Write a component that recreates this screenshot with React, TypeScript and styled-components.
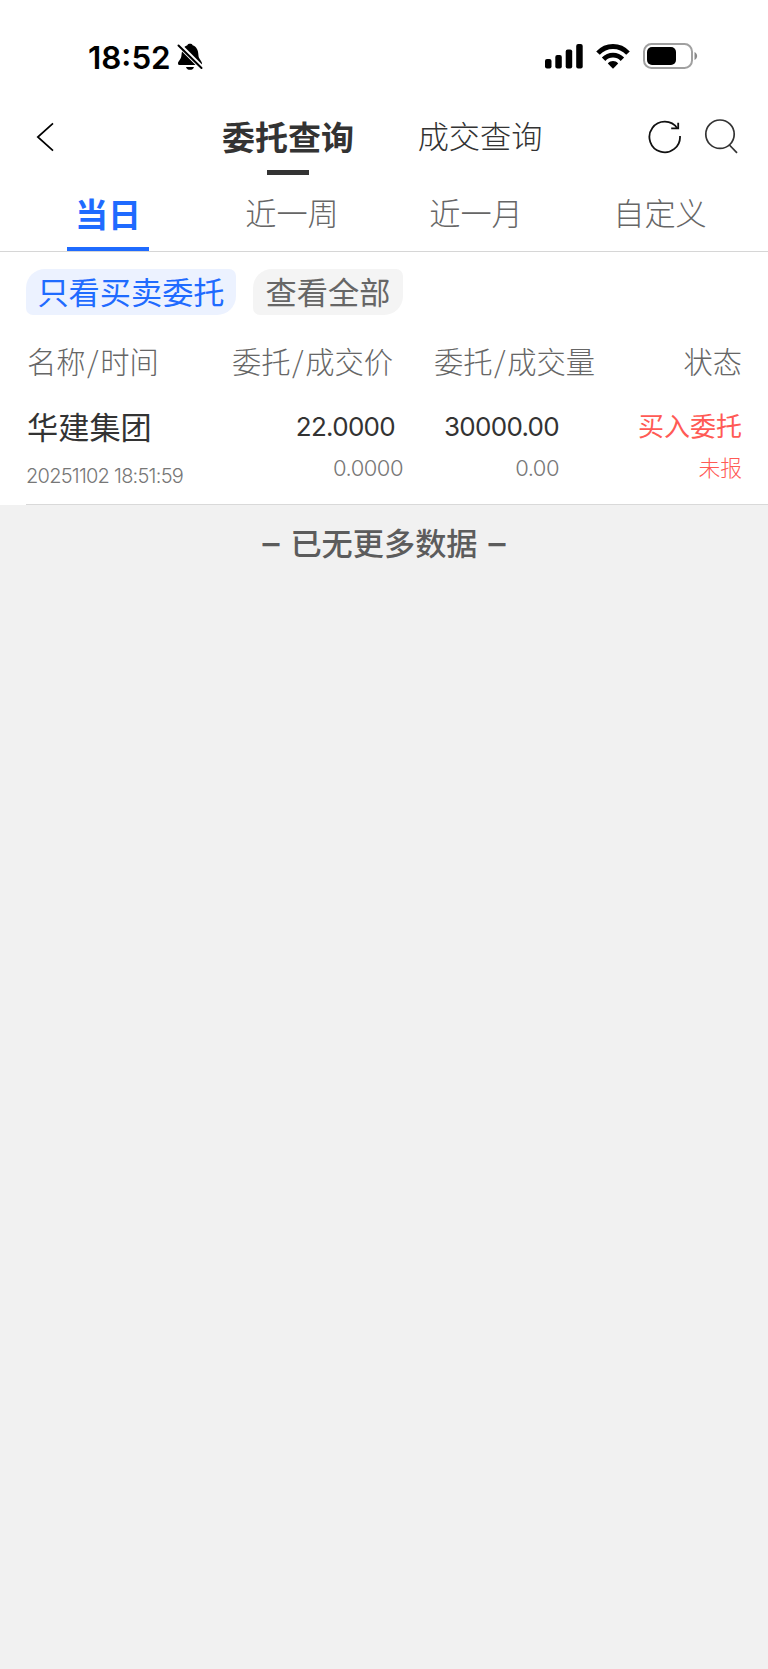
import React from 'react';
import styled, { createGlobalStyle } from 'styled-components';

const GlobalStyle = createGlobalStyle`
  * { box-sizing: border-box; }
  body {
    margin: 0;
    background: #f1f1f1;
    font-family: Inter, "Noto Sans CJK SC", sans-serif;
  }
`;

const CJK = '"Noto Sans CJK SC", sans-serif';

const Screen = styled.div`
  width: 768px;
  min-height: 1669px;
  background: #f1f1f1;
  color: #333;
  white-space: nowrap;
`;

const Panel = styled.div`
  background: #fff;
`;

const StatusBar = styled.header`
  height: 104px;
  padding: 38px 70px 30px 88px;
  display: flex;
  align-items: center;
  justify-content: space-between;
  color: #000;
`;

const Clock = styled.div`
  display: flex;
  align-items: center;
  gap: 6px;
  font-size: 31.4px;
  line-height: 36px;
  font-weight: 600;
  padding-top: 3px;
  svg { display: block; margin-top: -1px; }
`;

const StatusIcons = styled.div`
  display: flex;
  align-items: center;
  gap: 13px;
  svg { display: block; }
`;

const NavBar = styled.nav`
  height: 71px;
  display: grid;
  grid-template-columns: 222px 132px 64px 124px 1fr;
  align-items: stretch;
`;

const Back = styled.button`
  border: 0;
  background: none;
  padding: 17px 0 0 35px;
  display: flex;
  align-items: flex-start;
  justify-content: flex-start;
  svg { display: block; }
`;

const NavTab = styled.button<{ $active?: boolean; $col: number }>`
  grid-column: ${(p) => p.$col};
  border: 0;
  background: none;
  padding: ${(p) => (p.$active ? 9 : 8)}px 0 0;
  display: flex;
  flex-direction: column;
  align-items: center;
  justify-content: space-between;
  font: ${(p) => (p.$active ? 700 : 300)} ${(p) => (p.$active ? 33 : 31.2)}px/46px ${CJK};
  color: #333;
`;

const NavMark = styled.span`
  width: 42px;
  height: 5px;
  background: #333;
`;

const NavActions = styled.div`
  display: flex;
  padding: 14px 0 0 105px;
  gap: 21px;
  svg { display: block; }
`;

const RangeTabs = styled.div`
  height: 77px;
  padding: 0 16px;
  display: grid;
  grid-template-columns: repeat(4, 184px);
  border-bottom: 1px solid #d6d6d6;
`;

const RangeTab = styled.button<{ $active?: boolean }>`
  border: 0;
  background: none;
  padding: ${(p) => (p.$active ? 15 : 14)}px 0 0;
  display: flex;
  flex-direction: column;
  align-items: center;
  justify-content: space-between;
  font: ${(p) => (p.$active ? 700 : 300)} ${(p) => (p.$active ? 33 : 31.2)}px/46px ${CJK};
  color: ${(p) => (p.$active ? '#1f6bff' : '#666')};
`;

const RangeMark = styled.span`
  width: 82px;
  height: 4px;
  background: #1f6bff;
`;

const Filters = styled.div`
  display: flex;
  gap: 17px;
  padding: 17px 26px 0;
`;

const Chip = styled.button<{ $active?: boolean }>`
  border: 0;
  height: 46px;
  padding: 0 0 2px;
  width: ${(p) => (p.$active ? 210 : 150)}px;
  border-radius: 19px 7px 19px 7px;
  background: ${(p) => (p.$active ? '#ecf2ff' : '#f4f4f4')};
  color: ${(p) => (p.$active ? '#1f6bff' : '#666')};
  font: 400 31.2px/44px ${CJK};
`;

const HeadRow = styled.div`
  display: grid;
  grid-template-columns: 205px 202px 1fr auto;
  padding: 24px 26px 0 27px;
  font: 300 29.3px/42px ${CJK};
  color: #666;
`;

const Slash = styled.span`
  margin: 0 1.5px;
  &::before { content: '/'; }
`;

const Order = styled.div`
  display: grid;
  grid-template-columns: 200px 176px 156px 1fr;
  height: 124px;
  margin-left: 26px;
  padding: 0 26px 0 1px;
  border-bottom: 1px solid #d9d9d9;
`;

const Cell = styled.div<{ $end?: boolean }>`
  display: flex;
  flex-direction: column;
  align-items: ${(p) => (p.$end ? 'flex-end' : 'flex-start')};
`;

const Name = styled.div`
  margin-top: 22px;
  font: 400 31.2px/46px ${CJK};
`;

const Time = styled.div`
  margin: 15px 0 0 -1px;
  font: 300 20px/24px Inter, sans-serif;
  letter-spacing: -0.75px;
  color: #777;
`;

const Primary = styled.div<{ $inset?: boolean }>`
  margin: 29px ${(p) => (p.$inset ? 8 : 0)}px 0 0;
  font: 400 26px/34px Inter, sans-serif;
  letter-spacing: -0.7px;
`;

const Secondary = styled.div`
  margin-top: 11px;
  font: 300 22px/26px Inter, sans-serif;
  letter-spacing: -0.5px;
  color: #777;
`;

const Side = styled.div`
  margin-top: 26px;
  font: 400 26px/36px ${CJK};
  color: #ff5a55;
`;

const State = styled.div`
  margin-top: 9px;
  font: 300 21.8px/30px ${CJK};
  color: #ff5a55;
`;

const EndNote = styled.p`
  margin: 0;
  padding-top: 14px;
  display: flex;
  justify-content: center;
  gap: 11px;
  font: 500 31.2px/46px ${CJK};
  color: #5c5c5c;
`;

const Dash = styled.span`
  padding-top: 1px;
  font-family: Inter, sans-serif;
  font-weight: 500;
  font-size: 34px;
`;

const MutedBell = () => (
  <svg width="26" height="28" viewBox="0 0 26 28">
    <path d="M4.5 12C5 6 7.5 3 10.4 2.2C11 .4 15 .4 15.6 2.2C19.3 3.4 21.3 7 21.4 12C21.5 16 25 18 25 20.5Q25 22 23.5 22H2.5Q1 22 1 20.5C1 18 4.3 16.5 4.5 12Z" />
    <path d="M9 24H17C16 27.8 10 27.8 9 24Z" />
    <path d="M0 0L26 26" stroke="#fff" strokeWidth="5" />
    <path d="M1.5 2.5L24.5 25" stroke="#000" strokeWidth="2" strokeLinecap="round" />
  </svg>
);

const Signal = () => (
  <svg width="39" height="25" viewBox="0 0 39 25">
    <rect x="1" y="15" width="6.5" height="9.5" rx="2" />
    <rect x="11.3" y="11" width="6.5" height="13.5" rx="2" />
    <rect x="21.7" y="5.5" width="6.5" height="19" rx="2" />
    <rect x="32.2" y="0" width="6.5" height="24.5" rx="2" />
  </svg>
);

const Wifi = () => (
  <svg width="34" height="25" viewBox="0 0 34 25">
    <g fill="none" stroke="#000" strokeWidth="4.9">
      <path d="M2 9.2C10.3 .3 23.7 .3 32 9.2" />
      <path d="M7.6 15.2C12.9 9.8 21.1 9.8 26.4 15.2" />
    </g>
    <path d="M11.8 19.4C14.8 16.3 19.2 16.3 22.2 19.4L17 24.8Z" />
  </svg>
);

const Battery = () => (
  <svg width="55" height="26" viewBox="0 0 55 26">
    <rect x="1" y="1" width="48" height="24" rx="7.5" fill="none" stroke="#a0a0a0" strokeWidth="2" />
    <rect x="4" y="4" width="29" height="18" rx="5" />
    <path d="M51.5 9C55 10.4 55 15.6 51.5 17Z" fill="#8a8a8a" />
  </svg>
);

const Chevron = () => (
  <svg width="20" height="32" viewBox="0 0 20 32" fill="none" stroke="#000" strokeWidth="1.7">
    <path d="M18 2.4L2.8 16L18 29.6" />
  </svg>
);

const Refresh = () => (
  <svg width="36" height="38" viewBox="0 0 36 38" fill="none" stroke="#111" strokeWidth="1.8">
    <path d="M33 18A15.3 15.3 0 1 1 30.4 10.4" />
    <path d="M31.2 4.7V10.3H24.2" />
  </svg>
);

const Search = () => (
  <svg width="36" height="38" viewBox="0 0 36 38" fill="none" stroke="#333" strokeWidth="1.7">
    <circle cx="16" cy="16.2" r="14.2" />
    <path d="M25.4 27L33 34.8" />
  </svg>
);

const ranges = ['当日', '近一周', '近一月', '自定义'];

export default function App() {
  return (
    <Screen>
      <GlobalStyle />
      <Panel>
        <StatusBar>
          <Clock>
            18:52
            <MutedBell />
          </Clock>
          <StatusIcons>
            <Signal />
            <Wifi />
            <Battery />
          </StatusIcons>
        </StatusBar>
        <NavBar>
          <Back aria-label="返回">
            <Chevron />
          </Back>
          <NavTab $active $col={2}>
            委托查询
            <NavMark />
          </NavTab>
          <NavTab $col={4}>成交查询</NavTab>
          <NavActions>
            <Refresh />
            <Search />
          </NavActions>
        </NavBar>
        <RangeTabs>
          {ranges.map((label, i) => (
            <RangeTab key={label} $active={i === 0}>
              {label}
              {i === 0 && <RangeMark />}
            </RangeTab>
          ))}
        </RangeTabs>
        <Filters>
          <Chip $active>只看买卖委托</Chip>
          <Chip>查看全部</Chip>
        </Filters>
        <HeadRow>
          <span>名称<Slash />时间</span>
          <span>委托<Slash />成交价</span>
          <span>委托<Slash />成交量</span>
          <span>状态</span>
        </HeadRow>
        <Order>
          <Cell>
            <Name>华建集团</Name>
            <Time>20251102 18:51:59</Time>
          </Cell>
          <Cell $end>
            <Primary $inset>22.0000</Primary>
            <Secondary>0.0000</Secondary>
          </Cell>
          <Cell $end>
            <Primary>30000.00</Primary>
            <Secondary>0.00</Secondary>
          </Cell>
          <Cell $end>
            <Side>买入委托</Side>
            <State>未报</State>
          </Cell>
        </Order>
      </Panel>
      <EndNote>
        <Dash>–</Dash>
        <span>已无更多数据</span>
        <Dash>–</Dash>
      </EndNote>
    </Screen>
  );
}
